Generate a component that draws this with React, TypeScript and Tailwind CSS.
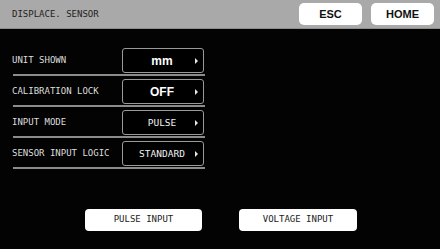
import React from "react";

const mono = { fontFamily: '"DejaVu Sans Mono", "Liberation Mono", monospace' } as const;
const sans = { fontFamily: '"Liberation Sans", Arial, sans-serif' } as const;

function ValueButton({ value, bold }: { value: string; bold?: boolean }) {
  return (
    <div className="relative w-[82px] h-[25px] rounded-[3px] border border-[#9a9a9a] bg-black flex items-center justify-center">
      {bold ? (
        <span style={sans} className="text-[12px] font-bold text-white leading-none pr-[2px]">
          {value}
        </span>
      ) : (
        <span style={mono} className="text-[9.5px] text-[#f0f0f0] leading-none pr-[2px]">
          {value}
        </span>
      )}
      <span className="absolute right-[5px] top-1/2 -translate-y-1/2 w-0 h-0 border-l-[3px] border-l-[#e8e8e8] border-y-[3px] border-y-transparent" />
    </div>
  );
}

function Row({ label, value, bold }: { label: string; value: string; bold?: boolean }) {
  return (
    <div className="flex flex-col">
      <div className="flex items-center justify-between pr-[1px]">
        <span style={mono} className="text-[9px] text-[#dcdcdc] leading-none">
          {label}
        </span>
        <ValueButton value={value} bold={bold} />
      </div>
      <div className="mt-[1px] ml-[1px] h-[2px] bg-[#8c8c8c]" />
    </div>
  );
}

export default function App() {
  return (
    <div className="w-[440px] h-[249px] bg-[#030303] flex flex-col overflow-hidden">
      <div className="h-[29px] bg-[#a9a9a9] flex items-center justify-between pl-[12px] pr-[6px] border-b border-[#8e8e8e]">
        <span style={mono} className="text-[9px] text-[#222] leading-none">
          DISPLACE. SENSOR
        </span>
        <div className="flex items-center gap-[9px]">
          <div style={sans} className="w-[63px] h-[22px] bg-white rounded-[5px] flex items-center justify-center text-[11px] font-bold text-[#111]">
            ESC
          </div>
          <div style={sans} className="w-[63px] h-[22px] bg-white rounded-[5px] flex items-center justify-center text-[11px] font-bold text-[#111]">
            HOME
          </div>
        </div>
      </div>
      <div className="pt-[19px] pl-[12px] w-[205px] flex flex-col gap-[3px]">
        <Row label="UNIT SHOWN" value="mm" bold />
        <Row label="CALIBRATION LOCK" value="OFF" bold />
        <Row label="INPUT MODE" value="PULSE" />
        <Row label="SENSOR INPUT LOGIC" value="STANDARD" />
      </div>
      <div className="mt-auto mb-[18px] pl-[85px] flex gap-[37px]">
        <div style={mono} className="w-[117px] h-[22px] bg-white rounded-[4px] flex items-center justify-center text-[9px] text-[#222]">
          PULSE INPUT
        </div>
        <div style={mono} className="w-[118px] h-[22px] bg-white rounded-[4px] flex items-center justify-center text-[9px] text-[#222]">
          VOLTAGE INPUT
        </div>
      </div>
    </div>
  );
}
